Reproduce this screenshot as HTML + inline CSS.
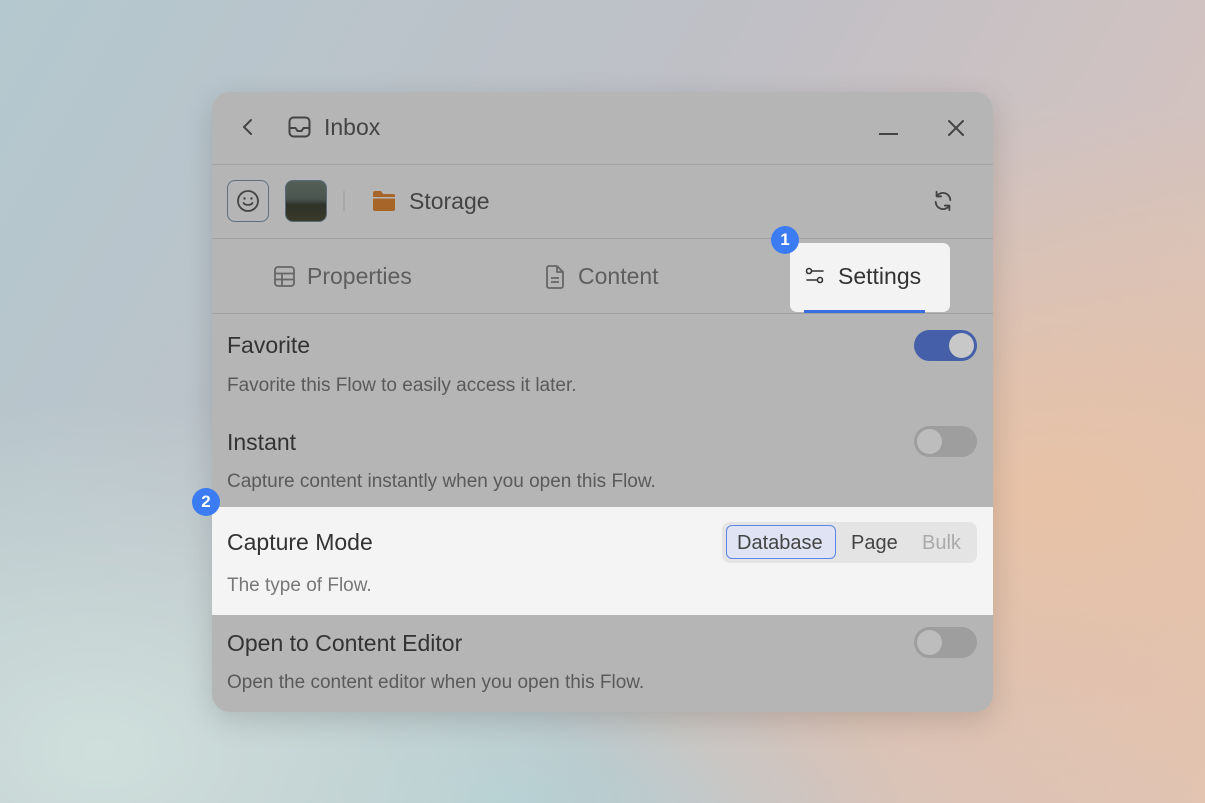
<!DOCTYPE html>
<html><head><style>
*{margin:0;padding:0;box-sizing:border-box}
body{width:1205px;height:803px;overflow:hidden;position:relative;font-family:"Liberation Sans",sans-serif;
background:radial-gradient(ellipse 600px 400px at 1050px 500px,#e8c2a6 0%,rgba(232,194,166,0) 100%),
radial-gradient(ellipse 500px 350px at 100px 750px,#cfe0dc 0%,rgba(207,224,220,0) 100%),
radial-gradient(ellipse 400px 200px at 500px 800px,#b3cfd3 0%,rgba(179,207,211,0) 100%),
linear-gradient(120deg,#b4c8cf 0%,#bfc0c6 45%,#cfc2c2 70%,#e0c4b4 100%);}
.win{position:absolute;left:212px;top:92px;width:781px;height:620px;background:#b5b5b5;border-radius:18px;overflow:hidden;box-shadow:0 8px 30px rgba(0,0,0,.15);color:#3f3f3f}
.line{position:absolute;left:0;width:781px;height:1px;background:#a2a2a2}
.t{position:absolute;white-space:nowrap}
.tog{position:absolute;left:702px;width:63px;height:31px;border-radius:16px}
.tog i{position:absolute;top:3px;width:25px;height:25px;border-radius:50%;background:#bdbdbd}
</style></head><body>
<div class="win">
  <svg style="position:absolute;left:28px;top:26px" width="16" height="18" viewBox="0 0 16 18"><path d="M11 2L4 9l7 7" fill="none" stroke="#444" stroke-width="2" stroke-linecap="round"/></svg>
  <svg style="position:absolute;left:76px;top:24px" width="23" height="22" viewBox="0 0 23 22"><rect x="1.5" y="1.5" width="20" height="19" rx="4" fill="none" stroke="#444" stroke-width="2"/><path d="M1.5 12h6l2 3h4l2-3h6" fill="none" stroke="#444" stroke-width="2"/></svg>
  <div class="t" style="left:112px;top:22px;font-size:23px;color:#444">Inbox</div>
  <div style="position:absolute;left:667px;top:41px;width:19px;height:2px;background:#444"></div>
  <svg style="position:absolute;left:735px;top:27px" width="18" height="18" viewBox="0 0 18 18"><path d="M2 2l14 14M16 2L2 16" stroke="#444" stroke-width="2" stroke-linecap="round"/></svg>
  <div class="line" style="top:72px"></div>
  <div style="position:absolute;left:15px;top:88px;width:42px;height:42px;border:1.5px solid #607080;border-radius:8px"></div>
  <svg style="position:absolute;left:24px;top:97px" width="24" height="24" viewBox="0 0 24 24"><circle cx="12" cy="12" r="10" fill="none" stroke="#444" stroke-width="1.8"/><circle cx="8.5" cy="9.5" r="1.2" fill="#444"/><circle cx="15.5" cy="9.5" r="1.2" fill="#444"/><path d="M7.5 14c1.5 2.5 7.5 2.5 9 0" fill="none" stroke="#444" stroke-width="1.8" stroke-linecap="round"/></svg>
  <div style="position:absolute;left:73px;top:88px;width:42px;height:42px;border-radius:8px;background:linear-gradient(#556058 0%,#4a5550 45%,#2e3228 60%,#3a3a2a 100%);border:1px solid #5a6a78"></div>
  <div style="position:absolute;left:131px;top:99px;width:2px;height:20px;background:#a8a8a8"></div>
  <svg style="position:absolute;left:161px;top:99px" width="22" height="20" viewBox="0 0 22 20"><path d="M0 2a2 2 0 012-2h6l2 3h10a2 2 0 012 2v1H0z" fill="#a8652a"/><path d="M0 7.5h22V18a2 2 0 01-2 2H2a2 2 0 01-2-2z" fill="#a8652a"/></svg>
  <div class="t" style="left:197px;top:96px;font-size:23px;color:#444">Storage</div>
  <svg style="position:absolute;left:720px;top:98px" width="22" height="22" viewBox="0 0 24 24"><path d="M20 11a8 8 0 00-14.5-4.5M4 13a8 8 0 0014.5 4.5M5 2v5h5M19 22v-5h-5" fill="none" stroke="#444" stroke-width="2" stroke-linecap="round" stroke-linejoin="round"/></svg>
  <div class="line" style="top:146px"></div>
  <svg style="position:absolute;left:62px;top:174px" width="21" height="21" viewBox="0 0 21 21"><rect x="1" y="1" width="19" height="19" rx="3" fill="none" stroke="#666" stroke-width="1.8"/><path d="M1 7.5h19M1 13.5h19M8 7.5v12.5" stroke="#666" stroke-width="1.8"/></svg>
  <div class="t" style="left:95px;top:171px;font-size:23px;color:#5e5e5e">Properties</div>
  <svg style="position:absolute;left:333px;top:173px" width="20" height="24" viewBox="0 0 20 24"><path d="M2 3a2 2 0 012-2h8l6 6v14a2 2 0 01-2 2H4a2 2 0 01-2-2z M12 1v6h6 M6 13h8M6 17h8" fill="none" stroke="#666" stroke-width="1.8" stroke-linejoin="round"/></svg>
  <div class="t" style="left:366px;top:171px;font-size:23px;color:#5e5e5e">Content</div>
  <div style="position:absolute;left:578px;top:151px;width:160px;height:69px;background:#f3f3f4;border-radius:7px"></div>
  <svg style="position:absolute;left:593px;top:174px" width="20" height="20" viewBox="0 0 20 20"><circle cx="4" cy="5" r="2.5" fill="none" stroke="#333" stroke-width="1.6"/><path d="M7 5h11M2 14h10" stroke="#333" stroke-width="1.6" stroke-linecap="round"/><circle cx="15" cy="14" r="2.5" fill="none" stroke="#333" stroke-width="1.6"/></svg>
  <div class="t" style="left:626px;top:171px;font-size:23px;color:#333">Settings</div>
  <div style="position:absolute;left:592px;top:218px;width:121px;height:3px;background:#3a6ee0"></div>
  <div style="position:absolute;left:559px;top:134px;width:28px;height:28px;border-radius:50%;background:#3b7cf2;color:#fff;font-size:17px;font-weight:bold;text-align:center;line-height:28px">1</div>
  <div class="line" style="top:221px"></div>
  <div class="t" style="left:15px;top:240px;font-size:23px;color:#333">Favorite</div>
  <div class="tog" style="top:238px;background:#4560a8"><i style="left:35px;background:#c8c8c8"></i></div>
  <div class="t" style="left:15px;top:283px;font-size:19px;color:#5a5a5a">Favorite this Flow to easily access it later.</div>
  <div class="t" style="left:15px;top:337px;font-size:23px;color:#333">Instant</div>
  <div class="tog" style="top:334px;background:#9e9e9e"><i style="left:3px"></i></div>
  <div class="t" style="left:15px;top:379px;font-size:19px;color:#5a5a5a">Capture content instantly when you open this Flow.</div>
  <div style="position:absolute;left:0;top:415px;width:781px;height:108px;background:#f4f4f4"></div>
  <div class="t" style="left:15px;top:437px;font-size:23px;color:#333">Capture Mode</div>
  <div style="position:absolute;left:510px;top:430px;width:255px;height:41px;background:#e4e4e4;border-radius:8px"></div>
  <div style="position:absolute;left:514px;top:433px;width:110px;height:34px;background:#dfe3f4;border:1.5px solid #5e86e6;border-radius:6px"></div>
  <div class="t" style="left:525px;top:440px;font-size:20px;color:#444">Database</div>
  <div class="t" style="left:639px;top:440px;font-size:20px;color:#444">Page</div>
  <div class="t" style="left:710px;top:440px;font-size:20px;color:#aaa">Bulk</div>
  <div class="t" style="left:15px;top:483px;font-size:19px;color:#777">The type of Flow.</div>
  <div class="t" style="left:15px;top:538px;font-size:23px;color:#333">Open to Content Editor</div>
  <div class="tog" style="top:535px;background:#9e9e9e"><i style="left:3px"></i></div>
  <div class="t" style="left:15px;top:580px;font-size:19px;color:#5a5a5a">Open the content editor when you open this Flow.</div>
</div>
<div style="position:absolute;left:192px;top:488px;width:28px;height:28px;border-radius:50%;background:#3b7cf2;color:#fff;font-size:17px;font-weight:bold;text-align:center;line-height:28px">2</div>
</body></html>
